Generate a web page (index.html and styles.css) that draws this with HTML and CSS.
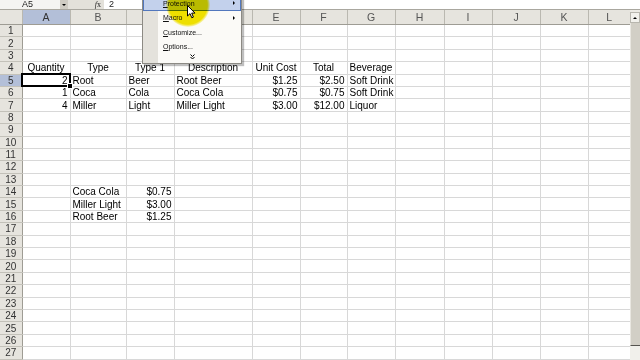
FILE: index.html
```html
<!DOCTYPE html>
<html lang="en">
<head>
    <meta charset="UTF-8">
    <meta name="viewport" content="width=device-width, initial-scale=1.0">
    <title>Book1</title>
    <link rel="stylesheet" href="styles.css">
</head>
<body>
    <div id="app">
        <!-- Barra de fórmulas -->
        <div class="formula-bar">
            <div class="name-box">A5</div>
            <div class="name-drop"><span class="tri"></span></div>
            <div class="fx-label"><i>f</i>x</div>
            <div class="formula-input">2</div>
        </div>

        <!-- Planilha -->
        <div class="sheet">
            <div class="grid-wrap">
                <table class="grid">
                    <colgroup>
                        <col style="width:22px"><col style="width:48px"><col style="width:56px"><col style="width:48px">
                        <col style="width:78px"><col style="width:48px"><col style="width:47px"><col style="width:48px">
                        <col style="width:49px"><col style="width:48px"><col style="width:48px"><col style="width:48px">
                        <col style="width:42px">
                    </colgroup>
                    <thead>
                        <tr>
                            <th class="corner"></th><th class="sel">A</th><th>B</th><th>C</th><th>D</th><th>E</th><th>F</th>
                            <th>G</th><th>H</th><th>I</th><th>J</th><th>K</th><th class="last">L</th>
                        </tr>
                    </thead>
                    <tbody>
                        <tr><th>1</th><td></td><td></td><td></td><td></td><td></td><td></td><td></td><td></td><td></td><td></td><td></td><td></td></tr>
                        <tr><th>2</th><td></td><td></td><td></td><td></td><td></td><td></td><td></td><td></td><td></td><td></td><td></td><td></td></tr>
                        <tr><th>3</th><td></td><td></td><td></td><td></td><td></td><td></td><td></td><td></td><td></td><td></td><td></td><td></td></tr>
                        <tr><th>4</th><td class="ctr">Quantity</td><td class="ctr">Type</td><td class="ctr">Type 1</td><td class="ctr">Description</td><td class="ctr">Unit Cost</td><td class="ctr">Total</td><td class="ctr">Beverage</td><td></td><td></td><td></td><td></td><td></td></tr>
                        <tr><th class="sel">5</th><td class="num active">2</td><td>Root</td><td>Beer</td><td>Root Beer</td><td class="num">$1.25</td><td class="num">$2.50</td><td>Soft Drink</td><td></td><td></td><td></td><td></td><td></td></tr>
                        <tr><th>6</th><td class="num">1</td><td>Coca</td><td>Cola</td><td>Coca Cola</td><td class="num">$0.75</td><td class="num">$0.75</td><td>Soft Drink</td><td></td><td></td><td></td><td></td><td></td></tr>
                        <tr><th>7</th><td class="num">4</td><td>Miller</td><td>Light</td><td>Miller Light</td><td class="num">$3.00</td><td class="num">$12.00</td><td>Liquor</td><td></td><td></td><td></td><td></td><td></td></tr>
                        <tr><th>8</th><td></td><td></td><td></td><td></td><td></td><td></td><td></td><td></td><td></td><td></td><td></td><td></td></tr>
                        <tr><th>9</th><td></td><td></td><td></td><td></td><td></td><td></td><td></td><td></td><td></td><td></td><td></td><td></td></tr>
                        <tr><th>10</th><td></td><td></td><td></td><td></td><td></td><td></td><td></td><td></td><td></td><td></td><td></td><td></td></tr>
                        <tr><th>11</th><td></td><td></td><td></td><td></td><td></td><td></td><td></td><td></td><td></td><td></td><td></td><td></td></tr>
                        <tr><th>12</th><td></td><td></td><td></td><td></td><td></td><td></td><td></td><td></td><td></td><td></td><td></td><td></td></tr>
                        <tr><th>13</th><td></td><td></td><td></td><td></td><td></td><td></td><td></td><td></td><td></td><td></td><td></td><td></td></tr>
                        <tr><th>14</th><td></td><td>Coca Cola</td><td class="num">$0.75</td><td></td><td></td><td></td><td></td><td></td><td></td><td></td><td></td><td></td></tr>
                        <tr><th>15</th><td></td><td>Miller Light</td><td class="num">$3.00</td><td></td><td></td><td></td><td></td><td></td><td></td><td></td><td></td><td></td></tr>
                        <tr><th>16</th><td></td><td>Root Beer</td><td class="num">$1.25</td><td></td><td></td><td></td><td></td><td></td><td></td><td></td><td></td><td></td></tr>
                        <tr><th>17</th><td></td><td></td><td></td><td></td><td></td><td></td><td></td><td></td><td></td><td></td><td></td><td></td></tr>
                        <tr><th>18</th><td></td><td></td><td></td><td></td><td></td><td></td><td></td><td></td><td></td><td></td><td></td><td></td></tr>
                        <tr><th>19</th><td></td><td></td><td></td><td></td><td></td><td></td><td></td><td></td><td></td><td></td><td></td><td></td></tr>
                        <tr><th>20</th><td></td><td></td><td></td><td></td><td></td><td></td><td></td><td></td><td></td><td></td><td></td><td></td></tr>
                        <tr><th>21</th><td></td><td></td><td></td><td></td><td></td><td></td><td></td><td></td><td></td><td></td><td></td><td></td></tr>
                        <tr><th>22</th><td></td><td></td><td></td><td></td><td></td><td></td><td></td><td></td><td></td><td></td><td></td><td></td></tr>
                        <tr><th>23</th><td></td><td></td><td></td><td></td><td></td><td></td><td></td><td></td><td></td><td></td><td></td><td></td></tr>
                        <tr><th>24</th><td></td><td></td><td></td><td></td><td></td><td></td><td></td><td></td><td></td><td></td><td></td><td></td></tr>
                        <tr><th>25</th><td></td><td></td><td></td><td></td><td></td><td></td><td></td><td></td><td></td><td></td><td></td><td></td></tr>
                        <tr><th>26</th><td></td><td></td><td></td><td></td><td></td><td></td><td></td><td></td><td></td><td></td><td></td><td></td></tr>
                        <tr><th>27</th><td></td><td></td><td></td><td></td><td></td><td></td><td></td><td></td><td></td><td></td><td></td><td></td></tr>
                    </tbody>
                </table>
            </div>

            <!-- Barra de rolagem -->
            <div class="vscroll">
                <div class="vs-up"><span class="tri-up"></span></div>
                <div class="vs-thumb"></div>
                <div class="vs-track"></div>
            </div>
        </div>

        <!-- Menu Ferramentas (aberto) -->
        <div class="menu">
            <div class="menu-item active"><span><u>P</u>rotection</span><span class="sub"></span></div>
            <div class="menu-item"><span><u>M</u>acro</span><span class="sub"></span></div>
            <div class="menu-item"><span><u>C</u>ustomize...</span></div>
            <div class="menu-item"><span><u>O</u>ptions...</span></div>
            <div class="menu-more">
                <svg width="5" height="6" viewBox="0 0 5 6">
                    <path d="M0.5 0.5 L2.5 2.5 L4.5 0.5 M0.5 3 L2.5 5 L4.5 3" fill="none" stroke="#000" stroke-width="1"/>
                </svg>
            </div>
        </div>

        <!-- Destaque do cursor -->
        <div class="spot"></div>
        <svg class="cursor" width="9" height="14" viewBox="0 0 9 14">
            <path d="M0.5 0.5 L0.5 11 L3 8.6 L4.8 12.8 L6.4 12.1 L4.7 8.1 L8 8.1 Z" fill="#fff" stroke="#000" stroke-width="1"/>
        </svg>
    </div>
</body>
</html>
```

FILE: styles.css
```css
/* Layout principal */
body {
    margin: 0;
    overflow: hidden;
    background: #fff;
}
#app {
    position: relative;
    width: 640px;
    height: 360px;
    overflow: hidden;
    font-family: "Liberation Sans", Arial, sans-serif;
}

/* Barra de fórmulas */
.formula-bar {
    display: flex;
    height: 10px;
    background: #e3e1da;
    font-size: 9px;
    line-height: 9px;
    color: #222;
    border-bottom: 1px solid #a9a79f;
    box-sizing: border-box;
}
.name-box {
    width: 60px;
    background: #f4f4f2;
    padding-left: 22px;
    box-sizing: border-box;
}
.name-drop {
    width: 8px;
    background: #cfccc3;
    display: flex;
    justify-content: center;
    align-items: center;
}
.name-drop .tri {
    width: 0;
    height: 0;
    border-left: 2px solid transparent;
    border-right: 2px solid transparent;
    border-top: 2px solid #000;
}
.fx-label {
    width: 36px;
    text-align: right;
    padding-right: 3px;
    box-sizing: border-box;
    font-family: "Liberation Serif", serif;
    font-size: 8px;
}
.formula-input {
    flex: 1;
    background: #fff;
    padding-left: 5px;
}

/* Planilha */
.sheet {
    display: flex;
    height: 350px;
}
.grid-wrap {
    width: 630px;
    overflow: hidden;
}
.grid {
    border-collapse: collapse;
    table-layout: fixed;
    width: 630px;
    font-size: 10px;
}
.grid thead th {
    height: 14px;
    background: #e6e4de;
    color: #555;
    font-weight: normal;
    font-size: 10.5px;
    line-height: 12px;
    border-right: 1px solid #bab8b0;
    border-bottom: 1px solid #9e9c94;
    padding: 0;
}
.grid thead th.sel {
    background: #b3bfd8;
    color: #333;
}
.grid thead th.last {
    border-right: none;
}
.grid tbody th {
    height: 11.4px;
    background: #e6e4de;
    color: #333;
    font-weight: normal;
    font-size: 10px;
    line-height: 11px;
    border-right: 1px solid #9e9c94;
    border-bottom: 1px solid #c3c1b9;
    padding: 0;
}
.grid tbody th.sel {
    background: #b3bfd8;
}
.grid td {
    height: 11.4px;
    padding: 0 2px;
    line-height: 11px;
    white-space: nowrap;
    overflow: hidden;
    border: 1px solid #d8d8d8;
    color: #000;
}
.grid td.num {
    text-align: right;
}
.grid td.ctr {
    text-align: center;
}
.grid td.active {
    position: relative;
    overflow: visible;
    outline: 2px solid #000;
    outline-offset: -1px;
}
.grid td.active::after {
    content: "";
    position: absolute;
    right: -3px;
    bottom: -3px;
    width: 4px;
    height: 4px;
    background: #000;
    border: 1px solid #fff;
}

/* Barra de rolagem */
.vscroll {
    width: 10px;
    display: flex;
    flex-direction: column;
    background: #eceae4;
}
.vs-up {
    height: 11px;
    margin-top: 2px;
    background: #f2f1ec;
    border: 1px solid #b8b6ae;
    box-sizing: border-box;
    display: flex;
    justify-content: center;
    align-items: center;
}
.tri-up {
    width: 0;
    height: 0;
    border-left: 2px solid transparent;
    border-right: 2px solid transparent;
    border-bottom: 2px solid #000;
}
.vs-thumb {
    height: 322px;
    background: #d2cfc6;
    border-left: 1px solid #e9e7e1;
    border-bottom: 1px solid #55544f;
}
.vs-track {
    flex: 1;
    background: #f1f0eb;
}

/* Menu */
.menu {
    position: absolute;
    left: 142px;
    top: -5px;
    width: 98px;
    border: 1px solid #8c8a84;
    background: linear-gradient(to right, #e4e2dc 15px, #fbfaf7 15px);
    box-shadow: 2px 2px 1px rgba(0, 0, 0, 0.25);
    font-size: 7px;
    color: #111;
}
.menu-item {
    height: 14.5px;
    display: flex;
    align-items: center;
    justify-content: space-between;
    padding: 0 5px 0 19px;
    box-sizing: border-box;
    border: 1px solid transparent;
}
.menu-item.active {
    background: #c3d1ec;
    border-color: #5277bd;
}
.menu-item .sub {
    width: 0;
    height: 0;
    border-top: 2px solid transparent;
    border-bottom: 2px solid transparent;
    border-left: 2px solid #000;
}
.menu-more {
    height: 9px;
    display: flex;
    justify-content: center;
    align-items: flex-start;
    padding-left: 1px;
}

/* Destaque amarelo do cursor */
.spot {
    position: absolute;
    left: 166px;
    top: -17px;
    width: 44px;
    height: 44px;
    border-radius: 50%;
    mix-blend-mode: multiply;
    background: radial-gradient(circle, #f2e400 62%, rgba(242, 228, 0, 0) 72%);
}
.cursor {
    position: absolute;
    left: 187px;
    top: 5px;
}
```
